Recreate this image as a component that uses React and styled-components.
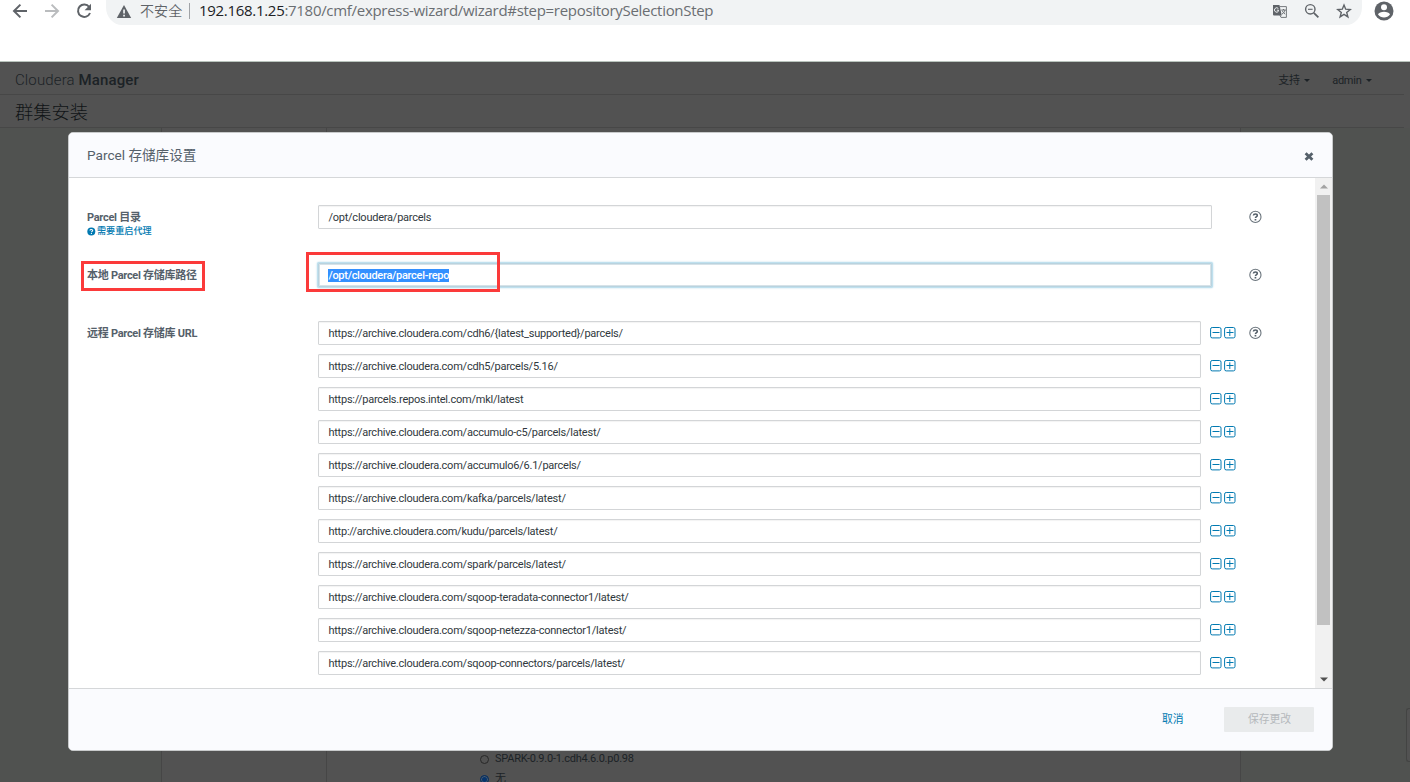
import React from "react";
import styled, { createGlobalStyle } from "styled-components";

const GlobalStyle = createGlobalStyle`
  * {
    box-sizing: border-box;
  }
  body {
    margin: 0;
    overflow: hidden;
    background: #fff;
    font-family: Roboto, "Noto Sans CJK SC", sans-serif;
  }
`;

const Screen = styled.div`
  position: relative;
  width: 1410px;
  height: 782px;
  overflow: hidden;
  display: flex;
  flex-direction: column;
`;

/* browser toolbar */
const Toolbar = styled.div`
  height: 61px;
  flex: none;
  display: flex;
  align-items: flex-start;
  padding-left: 11px;
  color: #5f6368;
  svg {
    display: block;
    flex: none;
  }
`;
const NavButton = styled.div`
  width: 32px;
  padding-top: 2px;
  color: ${(props) => (props.$disabled ? "#babcbe" : "#5f6368")};
  &:nth-child(3) {
    width: 31px;
  }
`;
const Omnibox = styled.div`
  width: 1256px;
  height: 25px;
  margin-right: 12px;
  padding: 0 10px;
  display: flex;
  align-items: center;
  background: #f1f3f4;
  border-radius: 0 0 16px 16px / 0 0 18px 18px;
`;
const Security = styled.div`
  width: 57px;
  padding: 0 0 6px 8px;
  font: 14px/20px "Noto Sans CJK SC", sans-serif;
  font-weight: 350;
  letter-spacing: 0.1px;
  white-space: nowrap;
`;
const Divider = styled.div`
  width: 1px;
  height: 16px;
  margin: 0 9px 4px 0;
  background: #a0a3a7;
`;
const Url = styled.div`
  flex: 1;
  padding-bottom: 5px;
  font: 15px/20px "Open Sans", "Noto Sans", sans-serif;
  letter-spacing: -0.3px;
  white-space: nowrap;
  color: #6a6e72;
  b {
    font-weight: 400;
    color: #202124;
  }
`;
const OmniIcons = styled.div`
  display: flex;
  gap: 16px;
  padding-bottom: 3px;
`;

/* dimmed page */
const Page = styled.div`
  flex: 1;
  display: flex;
  flex-direction: column;
  background: #525252;
  border-top: 1px solid #b9c4bd;
`;
const TopBar = styled.div`
  height: 33px;
  width: 1404px;
  flex: none;
  padding: 0 32px 0 15px;
  display: flex;
  align-items: center;
  border-bottom: 1px solid #474747;
  color: #1c2226;
`;
const Brand = styled.div`
  flex: 1;
  padding-top: 3px;
  font-size: 15px;
  font-weight: 300;
  letter-spacing: 0.13px;
  b {
    font-weight: 500;
  }
`;
const Menu = styled.div`
  display: flex;
  align-items: center;
  padding-top: 5px;
  margin-left: 22px;
  font-size: 11px;
  line-height: 16px;
  letter-spacing: -0.25px;
`;
const Caret = styled.span`
  margin-left: 4.5px;
  border: 3px solid transparent;
  border-top-color: #1c2226;
  border-bottom: 0;
`;
const PageTitle = styled.div`
  height: 33px;
  width: 1404px;
  flex: none;
  padding: 4px 0 0 15px;
  border-bottom: 1px solid #474747;
  font-size: 18.3px;
  line-height: 28px;
  font-weight: 300;
  color: #101416;
`;
const Columns = styled.div`
  flex: 1;
  min-height: 0;
  display: grid;
  grid-template-columns: 162px 165px 914px 1fr;
`;
const Column = styled.div`
  display: flex;
  flex-direction: column;
  justify-content: flex-end;
  background: ${(props) => (props.$side ? "#505250" : "#525252")};
  border-right: ${(props) => (props.$last ? 0 : "1px solid #464646")};
`;
const Options = styled.div`
  margin: 0 0 -7px 153px;
`;
const Option = styled.label`
  display: flex;
  align-items: center;
  height: 20px;
  font-size: 11px;
  line-height: 8px;
  letter-spacing: -0.25px;
  color: #1c2226;
`;
const Radio = styled.span`
  width: 9px;
  height: 9px;
  margin-right: 6px;
  border: 1px solid ${(props) => (props.$on ? "#0a2f5c" : "#282828")};
  border-radius: 50%;
  background: ${(props) => (props.$on ? "#06346c" : "transparent")};
  box-shadow: ${(props) => (props.$on ? "inset 0 0 0 1px #4b5c70" : "none")};
`;
const FloatingTab = styled.div`
  align-self: flex-end;
  width: 4px;
  height: 54px;
  margin-bottom: 20px;
  border: 1px solid #434443;
  border-right: 0;
  border-radius: 3px 0 0 3px;
  background: #525252;
`;

/* dialog */
const Overlay = styled.div`
  position: absolute;
  inset: 132px 77px 31px 68px;
  display: flex;
`;
const Dialog = styled.div`
  flex: 1;
  display: flex;
  flex-direction: column;
  overflow: hidden;
  background: #fff;
  border: 1px solid #c8cacb;
  border-radius: 5px;
  color: #55606a;
`;
const DialogHeader = styled.div`
  height: 45px;
  flex: none;
  display: flex;
  align-items: center;
  justify-content: space-between;
  padding: 1px 17px 0 18px;
  background: #fafbfe;
  border-bottom: 1px solid #d5d7d9;
`;
const DialogTitle = styled.div`
  padding-bottom: 2px;
  font-size: 13.6px;
  line-height: 20px;
`;
const DialogBody = styled.div`
  flex: 1;
  min-height: 0;
  display: flex;
`;
const Form = styled.div`
  flex: 1;
  padding: 27px 0 0 18px;
`;
const Field = styled.div`
  display: grid;
  grid-template-columns: 231px 918px auto;
  height: 58px;
  svg {
    display: block;
  }
`;
const Label = styled.div`
  padding-top: 5px;
  font-size: 11px;
  line-height: 16px;
  font-weight: 700;
  letter-spacing: -0.28px;
`;
const Hint = styled.div`
  display: flex;
  align-items: center;
  gap: 1px;
  margin-top: -1px;
  font-size: 9.1px;
  line-height: 12px;
  font-weight: 500;
  letter-spacing: 0;
  color: #0079b1;
`;
const Input = styled.div`
  width: ${(props) => props.$width || 894}px;
  height: 24px;
  padding: 1px 9px 0 9.4px;
  border: 1px solid ${(props) => (props.$focus ? "#b9d3df" : "#d3d5d7")};
  box-shadow: ${(props) =>
    props.$focus
      ? "0 0 0 1px #bfe0ee, 0 0 2px 1px #b5d9e8, inset 0 0 0 1px #d6e2e8"
      : "inset 0 1px 1px rgba(0,0,0,.05)"};
  border-radius: 1px;
  background: #fff;
  font-size: 11px;
  line-height: 22px;
  letter-spacing: -0.23px;
  white-space: nowrap;
  color: #30383d;
`;
const Selected = styled.span`
  display: inline-block;
  height: 13px;
  line-height: 13px;
  background: #3390ff;
  color: #fff;
  font-weight: 500;
  letter-spacing: -0.28px;
`;
const RedBox = styled.div`
  position: absolute;
  left: ${(props) => props.$x}px;
  top: ${(props) => props.$y}px;
  width: ${(props) => props.$w}px;
  height: ${(props) => props.$h}px;
  border: 3px solid #fb3a3a;
`;
const Help = styled.div`
  padding: 5px 0 0 12px;
`;
const UrlList = styled.div`
  display: flex;
  flex-direction: column;
  gap: 9px;
`;
const UrlRow = styled.div`
  display: flex;
`;
const RowButtons = styled.div`
  display: flex;
  gap: 2px;
  padding: 6px 0 0 9px;
`;
const Scrollbar = styled.div`
  width: 17px;
  flex: none;
  display: flex;
  flex-direction: column;
  align-items: center;
  background: #f1f1f1;
`;
const Arrow = styled.div`
  height: 17px;
  display: flex;
  align-items: center;
`;
const Thumb = styled.div`
  width: 13px;
  height: 430px;
  margin-bottom: 46px;
  background: #c1c1c1;
`;
const DialogFooter = styled.div`
  height: 62px;
  flex: none;
  display: flex;
  align-items: center;
  justify-content: flex-end;
  padding-right: 18px;
  background: #fafbfe;
  border-top: 1px solid #d5d7d9;
`;
const Button = styled.div`
  height: 25px;
  width: ${(props) => (props.$disabled ? 90 : 102)}px;
  padding-left: ${(props) => (props.$disabled ? "1px" : "40px")};
  text-align: ${(props) => (props.$disabled ? "center" : "left")};
  background: ${(props) => (props.$disabled ? "#e9ebec" : "transparent")};
  color: ${(props) => (props.$disabled ? "#b5b9bc" : "#0079b1")};
  border-radius: 1px;
  font-size: 10.8px;
  line-height: 26px;
`;

const URLS = [
  "https://archive.cloudera.com/cdh6/{latest_supported}/parcels/",
  "https://archive.cloudera.com/cdh5/parcels/5.16/",
  "https://parcels.repos.intel.com/mkl/latest",
  "https://archive.cloudera.com/accumulo-c5/parcels/latest/",
  "https://archive.cloudera.com/accumulo6/6.1/parcels/",
  "https://archive.cloudera.com/kafka/parcels/latest/",
  "http://archive.cloudera.com/kudu/parcels/latest/",
  "https://archive.cloudera.com/spark/parcels/latest/",
  "https://archive.cloudera.com/sqoop-teradata-connector1/latest/",
  "https://archive.cloudera.com/sqoop-netezza-connector1/latest/",
  "https://archive.cloudera.com/sqoop-connectors/parcels/latest/",
];

function HelpIcon() {
  return (
    <svg width="14" height="14" viewBox="0 0 14 14" fill="none">
      <circle cx="7.4" cy="6.9" r="5.6" stroke="#6a747c" strokeWidth="1.1" />
      <path
        d="M5.4 5.5C5.5 4.5 6.3 4 7.4 4s1.900.6 1.900 1.500c0 1.200-1.700 1.200-1.800 2.500"
        stroke="#55606a"
        strokeWidth="1.600"
      />
      <path d="M6.600 8.900h1.700v1.600H6.600z" fill="#55606a" />
    </svg>
  );
}

function SquareIcon({ plus }) {
  return (
    <svg width="12" height="12" viewBox="0 0 12 12" fill="none" stroke="#0079b1">
      <rect x=".6" y=".5" width="10.4" height="10.400" rx="1.600" />
      <path d={plus ? "M2.500 5.500h7M5.800 2.300v6.700" : "M2.500 5.500h7"} />
    </svg>
  );
}

function App() {
  return (
    <Screen>
      <GlobalStyle />
      <Toolbar>
        <NavButton>
          <svg width="18" height="18" viewBox="0 0 18 18" fill="none" stroke="currentColor" strokeWidth="2">
            <path d="M16 9H3.5M9.4 2.6L3 9l6.4 6.4" />
          </svg>
        </NavButton>
        <NavButton $disabled>
          <svg width="18" height="18" viewBox="0 0 18 18" fill="none" stroke="currentColor" strokeWidth="2">
            <path d="M2 9h12.5M8.6 2.6L15 9l-6.4 6.4" />
          </svg>
        </NavButton>
        <NavButton>
          <svg width="18" height="18" viewBox="0 0 18 18" fill="none">
            <path d="M14.2 5A6.2 6.2 0 1 0 15 11" stroke="currentColor" strokeWidth="2" />
            <path d="M16 1.8v6.4H9.6z" fill="currentColor" />
          </svg>
        </NavButton>
        <Omnibox>
          <svg width="16" height="20" viewBox="0 0 16 20">
            <path d="M8 2l7.2 13H.8z" fill="#5f6368" />
            <path d="M7.2 6.6h1.7v4H7.2zM7.2 11.8h1.7v1.6H7.2z" fill="#f1f3f4" />
          </svg>
          <Security>不安全</Security>
          <Divider />
          <Url>
            <b>192.168.1.25</b>:7180/cmf/express-wizard/wizard#step=repositorySelectionStep
          </Url>
          <OmniIcons>
            <svg width="16" height="16" viewBox="0 0 16 16">
              <path d="M1 2h6.500l2.300 10.500H2a1 1 0 0 1-1-1z" fill="#5f6368" />
              <path d="M8 3.600h6.400v10.800H9L7.800 12" fill="none" stroke="#75797d" />
              <path d="M6.400 5.600A2.200 2.200 0 1 0 6.500 8.200V7.200H4.800" fill="none" stroke="#f1f3f4" />
              <path d="M9.3 7h4.5M11.5 6v1M13 7c-.4 2-1.5 3.3-3 4M10.2 7.6c.6 1.6 1.6 2.6 3 3.6" fill="none" stroke="#5f6368" strokeWidth=".9" />
            </svg>
            <svg width="16" height="16" viewBox="0 0 16 16" fill="none" stroke="#5f6368">
              <circle cx="6.3" cy="6.3" r="4.7" strokeWidth="1.4" />
              <path d="M9.8 9.8l4.6 4.6" strokeWidth="1.8" />
              <path d="M4 6.3h4.6" strokeWidth="1.1" />
            </svg>
            <svg width="16" height="16" viewBox="0 0 16 16" fill="none" stroke="#5f6368" strokeWidth="1.4">
              <path d="M8 2l1.7 4.2 4.5.3-3.5 2.9 1.2 4.5L8 11.4l-3.9 2.5 1.2-4.5-3.5-2.9 4.5-.3z" />
            </svg>
          </OmniIcons>
        </Omnibox>
        <svg width="20" height="22" viewBox="0 0 20 22">
          <circle cx="10" cy="11" r="9.5" fill="#5f6368" />
          <circle cx="10" cy="7.3" r="3" fill="#fff" />
          <path d="M4 14.4c.5-1.8 3.5-2.7 6-2.7s5.5.9 6 2.7c-1.4 2-3.6 3-6 3s-4.6-1-6-3z" fill="#fff" />
        </svg>
      </Toolbar>

      <Page>
        <TopBar>
          <Brand>
            Cloudera <b>Manager</b>
          </Brand>
          <Menu>
            支持
            <Caret />
          </Menu>
          <Menu>
            admin
            <Caret />
          </Menu>
        </TopBar>
        <PageTitle>群集安装</PageTitle>
        <Columns>
          <Column $side />
          <Column />
          <Column>
            <Options>
              <Option>
                <Radio />
                SPARK-0.9.0-1.cdh4.6.0.p0.98
              </Option>
              <Option>
                <Radio $on />无
              </Option>
            </Options>
          </Column>
          <Column $side $last>
            <FloatingTab />
          </Column>
        </Columns>
      </Page>

      <Overlay>
        <Dialog>
          <DialogHeader>
            <DialogTitle>Parcel 存储库设置</DialogTitle>
            <svg width="11" height="11" viewBox="0 0 11 11" stroke="#55606a" strokeWidth="2.8">
              <path d="M1.6 3.2l6.8 6.6M8.4 3.2L1.6 9.8" />
            </svg>
          </DialogHeader>
          <DialogBody>
            <Form>
              <Field>
                <Label>
                  Parcel 目录
                  <Hint>
                    <svg width="9" height="9" viewBox="0 0 9 9">
                      <circle cx="4.3" cy="4.5" r="4" fill="#0079b1" />
                      <path d="M3 3.6c0-1.6 2.7-1.5 2.7 0 0 .8-1.3.8-1.3 1.7M4.4 6v1.1" fill="none" stroke="#fff" strokeWidth="1.1" />
                    </svg>
                    需要重启代理
                  </Hint>
                </Label>
                <Input>/opt/cloudera/parcels</Input>
                <Help>
                  <HelpIcon />
                </Help>
              </Field>
              <Field>
                <Label>本地 Parcel 存储库路径</Label>
                <Input $focus>
                  <Selected>/opt/cloudera/parcel-repo</Selected>
                </Input>
                <Help>
                  <HelpIcon />
                </Help>
              </Field>
              <Field>
                <Label>远程 Parcel 存储库 URL</Label>
                <UrlList>
                  {URLS.map((url) => (
                    <UrlRow key={url}>
                      <Input $width={883}>{url}</Input>
                      <RowButtons>
                        <SquareIcon />
                        <SquareIcon plus />
                      </RowButtons>
                    </UrlRow>
                  ))}
                </UrlList>
                <Help>
                  <HelpIcon />
                </Help>
              </Field>
            </Form>
            <Scrollbar>
              <Arrow>
                <svg width="8" height="5" viewBox="0 0 8 5">
                  <path d="M0 4.5L4 .5l4 4z" fill="#a3a3a3" />
                </svg>
              </Arrow>
              <Thumb />
              <Arrow>
                <svg width="8" height="5" viewBox="0 0 8 5">
                  <path d="M0 .5h8l-4 4z" fill="#505050" />
                </svg>
              </Arrow>
            </Scrollbar>
          </DialogBody>
          <DialogFooter>
            <Button>取消</Button>
            <Button $disabled>保存更改</Button>
          </DialogFooter>
        </Dialog>
      </Overlay>
      <RedBox $x={81} $y={261} $w={124} $h={30} />
      <RedBox $x={306} $y={252} $w={194} $h={40} />
    </Screen>
  );
}

export default App;
